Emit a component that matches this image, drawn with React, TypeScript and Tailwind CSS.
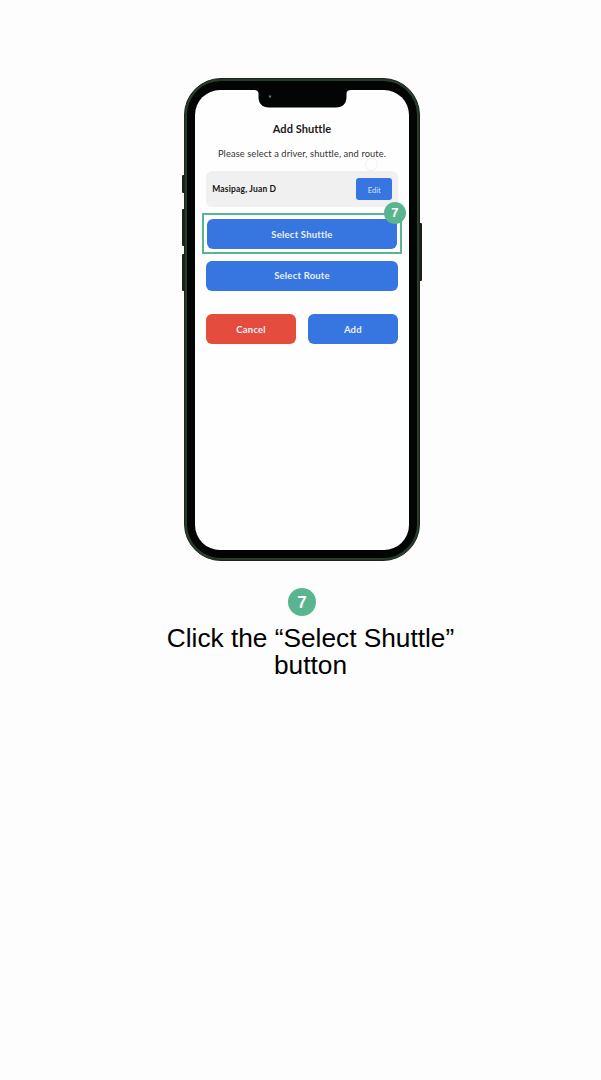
import React from "react";

const ui = "font-['Lato','Noto_Sans',sans-serif]";

function ActionButton({ label, className }: { label: string; className: string }) {
  return (
    <button
      className={`flex h-[30px] items-center justify-center rounded-[6px] pt-px text-[9.5px] leading-[12px] font-bold tracking-[0.2px] text-[#e9f1f7] ${className}`}
    >
      {label}
    </button>
  );
}

function LeftKeys() {
  return (
    <div className="flex w-[2px] flex-col pt-[97px]">
      <span className="h-[18px] rounded-l-[1px] bg-[#162218]" />
      <span className="mt-[16px] h-[37px] rounded-l-[1px] bg-[#162218]" />
      <span className="mt-[8px] h-[37px] rounded-l-[1px] bg-[#162218]" />
    </div>
  );
}

function RightKey() {
  return (
    <div className="w-[2px] pt-[145px]">
      <span className="block h-[58px] rounded-r-[1px] bg-[#162218]" />
    </div>
  );
}

function Notch() {
  return (
    <svg className="mx-auto -mt-px block" width="97" height="20" viewBox="0 0 97 20">
      <path
        d="M0 0H97V1C94 1 92.500 2 92.500 5V8C92.500 14.500 88.500 18.500 82 18.500H15C8.500 18.500 4.500 14.500 4.500 8V5C4.500 2 3 1 0 1Z"
        fill="#030404"
      />
      <circle cx="16" cy="7.500" r="2" fill="#101a24" />
      <circle cx="16" cy="7.500" r="0.900" fill="#71879b" />
    </svg>
  );
}

function Screen() {
  return (
    <div className={`flex h-[460px] w-[213.5px] flex-col rounded-[25px] bg-[#fefefe] ${ui}`}>
      <Notch />
      <h1 className="mt-[13px] text-center text-[11px] leading-[14px] font-bold tracking-[0.06px] text-[#191919]">
        Add Shuttle
      </h1>
      <p className="pt-[12px] text-center text-[9.3px] leading-[12px] tracking-[0.1px] whitespace-nowrap text-[#333]">
        Please select a driver, shuttle, and route.
      </p>
      <div className="flex flex-col gap-[6px] px-[7px] pt-[11.5px]">
        <div className="relative mx-[4px] flex h-[36px] items-center justify-between rounded-[6px] bg-[#f0f0f0] pr-[5.5px] pl-[6px]">
          <span className="absolute -top-[13px] right-[20px] size-[13px] rounded-full border border-[#f0f0f0]" />
          <span className="pt-px text-[8.5px] leading-[11px] font-bold tracking-[0.16px] text-[#161616]">
            Masipag, Juan D
          </span>
          <button className="flex h-[22px] w-[36px] items-center justify-center rounded-[3px] bg-[#3775e0] pt-px text-[7.6px] leading-[10px] text-[#d3e2ef]">
            Edit
          </button>
        </div>
        <div className="relative h-[41px] border-2 border-[#59b590] px-[2.5px] pt-[4px]">
          <ActionButton label="Select Shuttle" className="w-full bg-[#3775e0]" />
          <span className="absolute -top-[13.5px] -right-[6px] flex size-[22px] items-center justify-center rounded-full bg-[#59b590] font-['Liberation_Sans',sans-serif] text-[13px] leading-none font-bold text-white">
            7
          </span>
        </div>
      </div>
      <div className="flex flex-col gap-[23.5px] px-[11px] pt-[6.5px]">
        <ActionButton label="Select Route" className="w-full bg-[#3775e0]" />
        <div className="grid grid-cols-2 gap-[12px]">
          <ActionButton label="Cancel" className="bg-[#e44d3d]" />
          <ActionButton label="Add" className="bg-[#3775e0]" />
        </div>
      </div>
    </div>
  );
}

export default function App() {
  return (
    <main className="flex min-h-[1080px] w-[601px] flex-col items-center bg-[#fdfdfd] pt-[78px] pl-[3px]">
      <div className="flex">
        <LeftKeys />
        <div className="h-[483px] w-[235.5px] rounded-[37px] border border-[#1c241d] bg-[#263d29] p-[2px]">
          <div className="flex h-full justify-center rounded-[34px] bg-[#030404] pt-[8.5px]">
            <Screen />
          </div>
        </div>
        <RightKey />
      </div>
      <span className="mt-[27px] flex size-[28px] items-center justify-center rounded-full bg-[#59b590] font-['Liberation_Sans',sans-serif] text-[17px] leading-none font-bold text-white">
        7
      </span>
      <p className="mt-[9px] ml-[17px] w-[310px] text-center font-['Liberation_Sans',sans-serif] text-[26.25px] leading-[27px] text-black">
        Click the “Select Shuttle” button
      </p>
    </main>
  );
}
